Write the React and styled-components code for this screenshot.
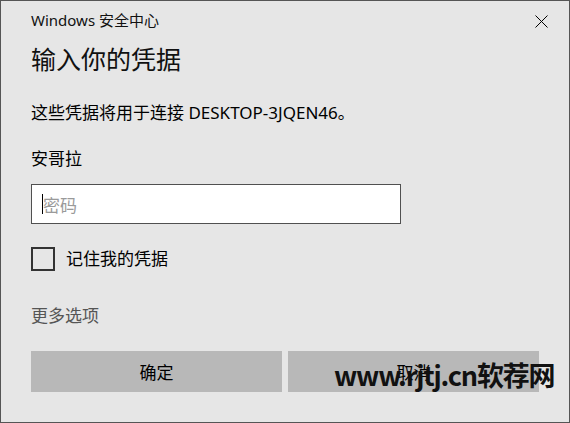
import React from "react";
import styled, { createGlobalStyle } from "styled-components";

const GlobalStyle = createGlobalStyle`
  html, body {
    margin: 0;
    padding: 0;
    background: #e6e6e6;
  }
  body {
    font-family: "Noto Sans", "Noto Sans CJK SC", sans-serif;
  }
`;

const Window = styled.div`
  position: relative;
  box-sizing: border-box;
  width: 570px;
  height: 423px;
  padding: 0 30px;
  background: #e6e6e6;
  border: 1px solid #555;
  color: #000;
  overflow: hidden;
`;

const TitleBar = styled.div`
  height: 38px;
  display: flex;
  align-items: center;
  justify-content: space-between;
`;

const Title = styled.span`
  font-size: 15px;
  line-height: 20px;
  color: #111;
`;

const Close = styled.svg`
  width: 13px;
  height: 13px;
  margin-right: -9px;
  margin-top: 3px;
`;

const Heading = styled.h1`
  margin: 4px 0 0;
  font-size: 25px;
  font-weight: 400;
  line-height: 32px;
  color: #111;
`;

const Text = styled.p`
  margin: ${(p) => p.$top}px 0 0;
  font-size: 17px;
  line-height: 24px;
  color: ${(p) => p.$color || "#000"};
`;

const Field = styled.div`
  margin-top: 13px;
  box-sizing: border-box;
  width: 370px;
  height: 40px;
  border: 1px solid #505050;
  background: #fff;
  display: flex;
  align-items: center;
  padding-left: 10px;
`;

const Caret = styled.span`
  width: 1px;
  height: 20px;
  background: #000;
`;

const Placeholder = styled.span`
  font-size: 17px;
  color: #9a9a9a;
`;

const CheckRow = styled.div`
  margin-top: 23px;
  height: 24px;
  display: flex;
  align-items: center;
  gap: 11px;
`;

const Box = styled.span`
  box-sizing: border-box;
  width: 24px;
  height: 24px;
  border: 2px solid #333;
`;

const Buttons = styled.div`
  margin-top: 23px;
  display: grid;
  grid-template-columns: 1fr 1fr;
  gap: 6px;
`;

const Button = styled.div`
  height: 41px;
  background: #b8b8b8;
  display: flex;
  align-items: center;
  justify-content: center;
  font-size: 17px;
  color: #000;
`;

const Watermark = styled.div`
  position: absolute;
  left: 333px;
  top: 360px;
  font-family: "Noto Sans CJK SC", sans-serif;
  font-weight: 700;
  font-size: 27px;
  line-height: 28px;
  letter-spacing: -1.2px;
  color: #111;
  white-space: nowrap;
`;

export default function App() {
  return (
    <>
      <GlobalStyle />
      <Window>
        <TitleBar>
          <Title>Windows 安全中心</Title>
          <Close viewBox="0 0 13 13">
            <path d="M0.5 0.5 L12.5 12.5 M12.5 0.5 L0.5 12.5" stroke="#000" strokeWidth="1" />
          </Close>
        </TitleBar>
        <Heading>输入你的凭据</Heading>
        <Text $top={26}>这些凭据将用于连接 DESKTOP-3JQEN46。</Text>
        <Text $top={22}>安哥拉</Text>
        <Field>
          <Caret />
          <Placeholder>密码</Placeholder>
        </Field>
        <CheckRow>
          <Box />
          <Text $top={0}>记住我的凭据</Text>
        </CheckRow>
        <Text $top={33} $color="#555">更多选项</Text>
        <Buttons>
          <Button>确定</Button>
          <Button>取消</Button>
        </Buttons>
        <Watermark>www.rjtj.cn软荐网</Watermark>
      </Window>
    </>
  );
}
